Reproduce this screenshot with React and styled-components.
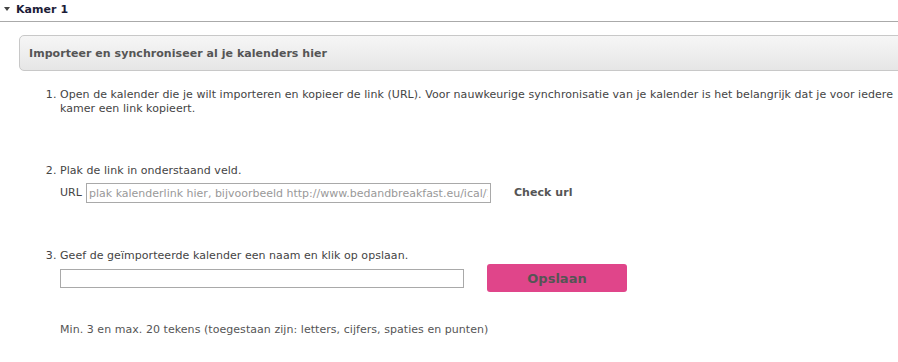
import React from "react"
import styled, { createGlobalStyle } from "styled-components"

const GlobalStyle = createGlobalStyle`
  html, body {
    margin: 0;
    padding: 0;
    background: #fff;
    overflow: hidden;
  }
  body {
    font-family: "DejaVu Sans", Verdana, sans-serif;
    font-size: 11px;
    letter-spacing: 0.05px;
    color: #444;
  }
`

const Page = styled.div`
  width: 898px;
  height: 362px;
`

const Header = styled.div`
  display: flex;
  align-items: center;
  gap: 6px;
  height: 16px;
  padding: 1px 0 4px 4px;
  border-bottom: 1px solid #aaa;
  color: #1c1c38;
  font-weight: bold;
  font-size: 11px;
`

const Caret = styled.span`
  width: 0;
  height: 0;
  border-left: 3.5px solid transparent;
  border-right: 3.5px solid transparent;
  border-top: 4px solid #444;
`

const Body = styled.div`
  padding: 13px 0 0 19px;
`

const Panel = styled.div`
  display: flex;
  align-items: center;
  height: 34px;
  margin-right: -6px;
  padding-left: 9px;
  border: 1px solid #c8c8c8;
  border-radius: 5px;
  background: linear-gradient(#f6f6f6, #e6e6e6);
  color: #555;
  font-weight: bold;
`

const Steps = styled.ol`
  margin: 0;
  padding: 17px 0 0 41px;
  list-style: decimal;
`

const Step = styled.li`
  line-height: 14px;
  padding-bottom: ${(p) => p.$gap}px;
  &::marker {
    color: #444;
  }
`

const Row = styled.div`
  display: flex;
  align-items: center;
  gap: ${(p) => p.$gap || 0}px;
  margin-top: ${(p) => p.$top || 0}px;
`

const Label = styled.span`
  margin-right: 4px;
`

const Field = styled.input`
  box-sizing: border-box;
  width: ${(p) => p.$width}px;
  height: ${(p) => p.$height}px;
  padding: 0 2px;
  border: 1px solid #a9a9a9;
  font: inherit;
  color: #444;
  outline: none;
  &::placeholder {
    color: #999;
  }
`

const LinkButton = styled.span`
  margin-left: 23px;
  font-weight: bold;
  color: #555;
`

const SaveButton = styled.button`
  width: 140px;
  height: 28px;
  margin-left: 23px;
  border: none;
  border-radius: 3px;
  background: #e0458a;
  color: #555;
  font-family: inherit;
  font-size: 13px;
  font-weight: bold;
`

const Note = styled.p`
  margin: 31px 0 0;
  color: #555;
`

export default function App() {
  return (
    <Page>
      <GlobalStyle />
      <Header>
        <Caret />
        Kamer 1
      </Header>
      <Body>
        <Panel>Importeer en synchroniseer al je kalenders hier</Panel>
        <Steps>
          <Step $gap={48}>
            Open de kalender die je wilt importeren en kopieer de link (URL). Voor
            nauwkeurige synchronisatie van je kalender is het belangrijk dat je
            voor iedere kamer een link kopieert.
          </Step>
          <Step $gap={46}>
            Plak de link in onderstaand veld.
            <Row $top={5}>
              <Label>URL</Label>
              <Field
                $width={405}
                $height={20}
                placeholder="plak kalenderlink hier, bijvoorbeeld http://www.bedandbreakfast.eu/ical/123"
              />
              <LinkButton>Check url</LinkButton>
            </Row>
          </Step>
          <Step $gap={0}>
            Geef de geïmporteerde kalender een naam en klik op opslaan.
            <Row $top={1}>
              <Field $width={404} $height={19} />
              <SaveButton>Opslaan</SaveButton>
            </Row>
            <Note>Min. 3 en max. 20 tekens (toegestaan zijn: letters, cijfers, spaties en punten)</Note>
          </Step>
        </Steps>
      </Body>
    </Page>
  )
}
